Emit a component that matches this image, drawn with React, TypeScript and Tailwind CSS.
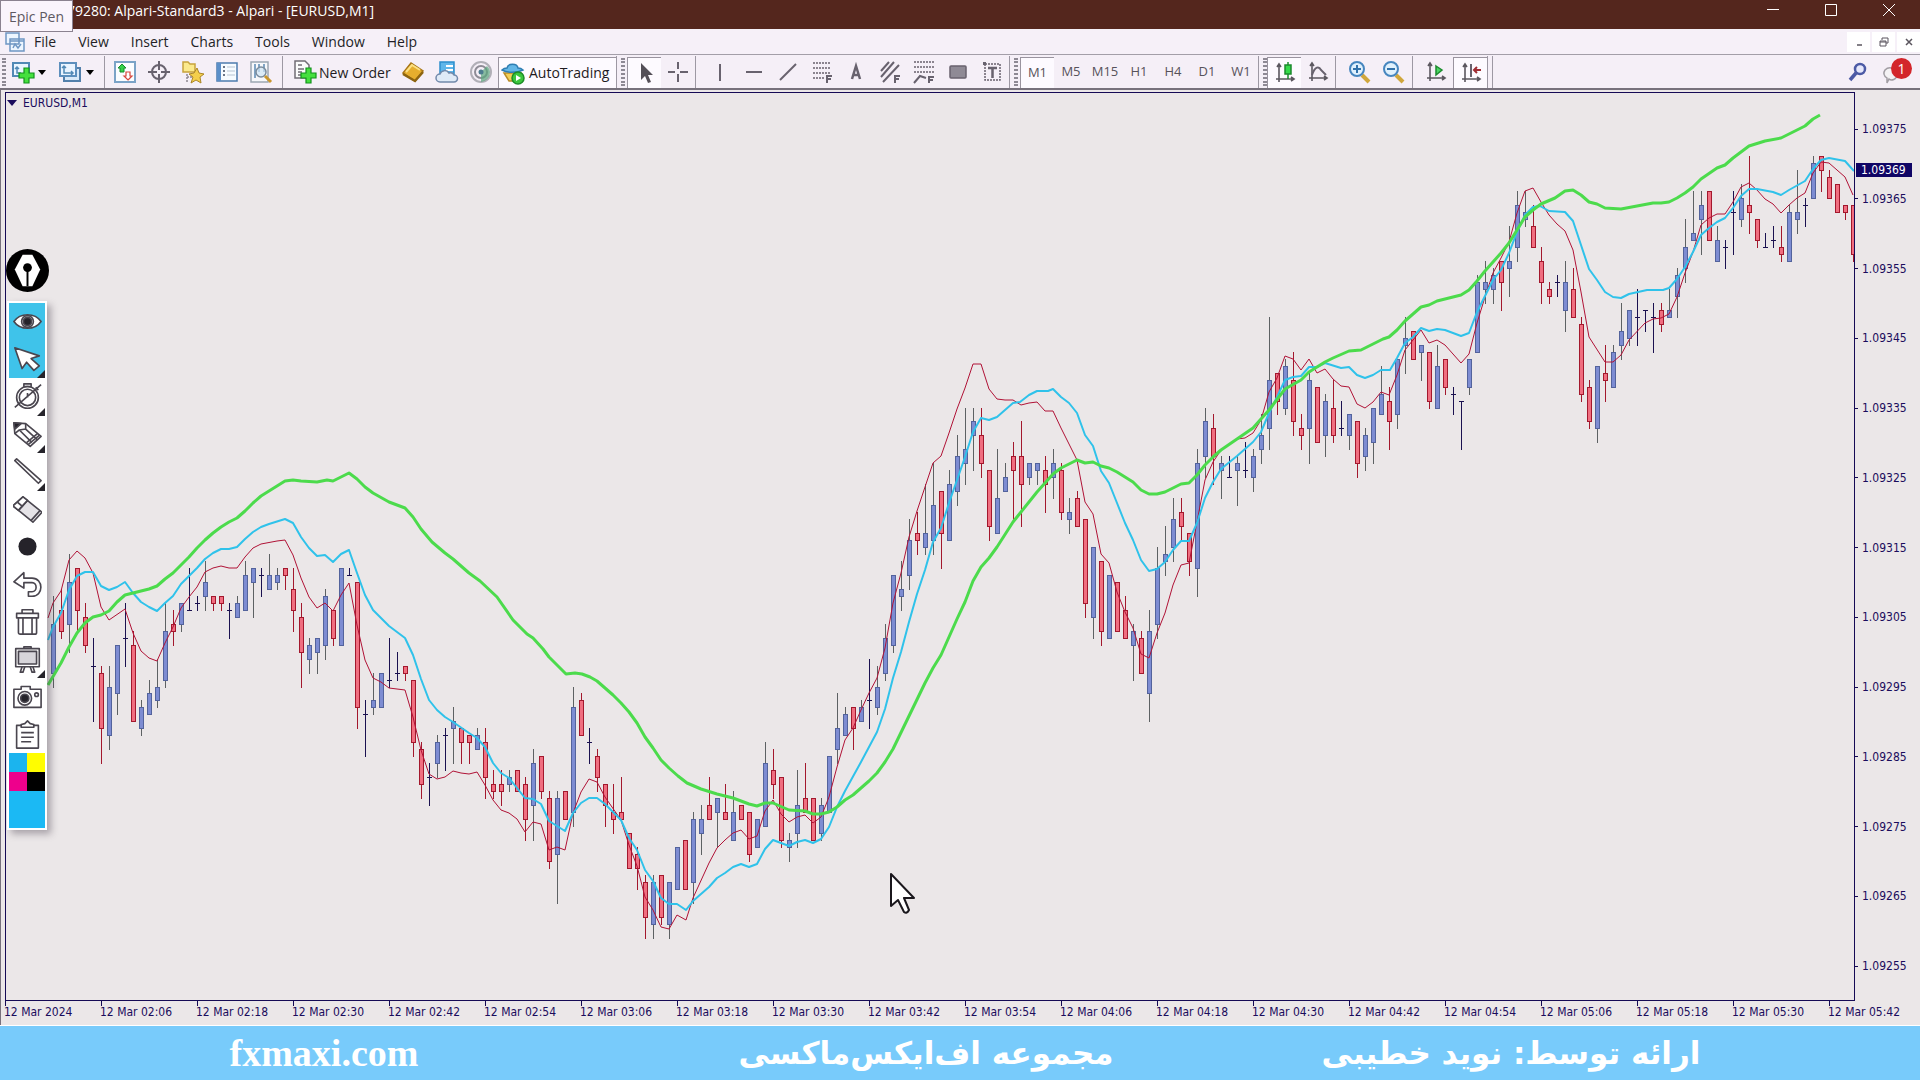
import type { ReactNode } from 'react';

type Candle = [open: number, high: number, low: number, close: number];

const BAR_WIDTH = 8;
const FIRST_BAR_X = 53;
const TOP_PRICE = 375;
const TOP_PRICE_Y = 128.5;
const POINT_HEIGHT = 6.975;

// Prices are points above 1.09000
const CANDLES: Candle[] = [
  [297, 308, 295, 304], [306, 309, 302, 303], [304, 314, 300, 310], [312, 312, 303, 306], [305, 307, 300, 301],
  [298, 302, 290, 298], [297, 298, 284, 289], [288, 298, 286, 295], [294, 301, 291, 301], [302, 307, 298, 302],
  [301, 303, 290, 290], [289, 293, 288, 292], [291, 296, 291, 294], [293, 299, 292, 295], [296, 307, 295, 303],
  [304, 306, 301, 303], [304, 307, 303, 307], [306, 312, 306, 306], [307, 308, 306, 307], [308, 313, 306, 310],
  [308, 308, 306, 307], [308, 308, 306, 307], [306, 307, 302, 306], [305, 308, 305, 307], [306, 313, 306, 311],
  [310, 312, 305, 312], [311, 312, 308, 311], [309, 314, 309, 311], [310, 312, 309, 311], [312, 312, 309, 311],
  [309, 312, 303, 306], [305, 307, 295, 300], [299, 302, 297, 301], [300, 302, 297, 302], [301, 309, 299, 308],
  [306, 306, 301, 302], [301, 312, 301, 312], [311, 312, 311, 311], [310, 310, 289, 292], [291, 293, 285, 291],
  [292, 297, 291, 293], [292, 297, 292, 297], [296, 302, 295, 296], [297, 300, 296, 297], [298, 298, 296, 297],
  [296, 296, 285, 287], [286, 287, 279, 281], [282, 284, 278, 282], [284, 288, 282, 287], [288, 289, 283, 288],
  [289, 292, 284, 290], [289, 289, 284, 287], [288, 288, 284, 287], [286, 289, 286, 288], [287, 289, 279, 282],
  [281, 283, 279, 280], [281, 283, 278, 280], [281, 283, 280, 282], [283, 283, 280, 280], [281, 282, 273, 276],
  [278, 286, 273, 284], [285, 285, 279, 280], [279, 280, 269, 270], [271, 280, 264, 279], [280, 280, 276, 276],
  [277, 295, 275, 292], [293, 294, 288, 288], [287, 289, 284, 287], [285, 286, 280, 282], [281, 281, 275, 278],
  [277, 281, 274, 276], [277, 282, 276, 276], [274, 274, 269, 269], [271, 272, 266, 269], [267, 268, 259, 262],
  [261, 268, 259, 267], [268, 268, 261, 262], [261, 267, 259, 267], [266, 272, 266, 272], [273, 273, 266, 266],
  [267, 277, 264, 276], [274, 278, 271, 276], [278, 282, 276, 276], [277, 279, 272, 279], [277, 281, 276, 276],
  [273, 280, 273, 277], [278, 278, 276, 276], [277, 277, 270, 271], [272, 276, 272, 276], [275, 287, 275, 284],
  [283, 286, 279, 281], [282, 282, 272, 273], [272, 274, 270, 273], [274, 283, 272, 278], [279, 284, 277, 277],
  [279, 279, 273, 273], [274, 279, 273, 278], [277, 285, 277, 285], [286, 294, 284, 289], [288, 292, 288, 291],
  [292, 292, 286, 289], [290, 293, 290, 292], [293, 299, 289, 293], [292, 298, 291, 295], [297, 304, 296, 302],
  [301, 311, 300, 311], [308, 313, 306, 309], [311, 319, 309, 316], [317, 320, 314, 316], [315, 324, 314, 317],
  [316, 327, 314, 321], [323, 323, 312, 317], [316, 326, 316, 324], [323, 331, 321, 328], [327, 335, 324, 329],
  [331, 335, 326, 333], [331, 335, 325, 327], [326, 326, 316, 318], [317, 329, 317, 322], [323, 327, 323, 325],
  [328, 330, 319, 326], [328, 333, 318, 324], [325, 327, 324, 327], [326, 327, 324, 327], [326, 328, 320, 324],
  [325, 329, 322, 327], [326, 327, 319, 320], [319, 322, 317, 320], [322, 323, 318, 318], [319, 319, 305, 307],
  [305, 315, 302, 315], [313, 313, 301, 303], [302, 311, 302, 311], [310, 310, 303, 303], [306, 308, 302, 302],
  [301, 304, 296, 303], [302, 303, 297, 297], [294, 306, 290, 303], [304, 315, 302, 312], [313, 318, 311, 314],
  [315, 322, 313, 319], [320, 322, 316, 318], [317, 317, 311, 313], [312, 329, 308, 327], [328, 335, 325, 333],
  [332, 334, 324, 328], [326, 328, 322, 327], [325, 328, 325, 325], [326, 328, 321, 327], [326, 330, 325, 326],
  [325, 329, 323, 328], [329, 334, 327, 331], [332, 348, 329, 339], [340, 340, 334, 336], [335, 342, 334, 341],
  [339, 343, 331, 333], [332, 334, 329, 331], [332, 340, 327, 339], [338, 338, 330, 330], [331, 337, 328, 336],
  [335, 339, 330, 331], [332, 336, 331, 332], [331, 334, 329, 334], [333, 333, 325, 327], [328, 332, 326, 331],
  [330, 335, 327, 335], [334, 341, 334, 337], [336, 338, 329, 333], [334, 342, 332, 342], [344, 348, 340, 345],
  [346, 346, 342, 342], [343, 344, 339, 344], [343, 343, 335, 336], [335, 344, 335, 341], [342, 342, 337, 338],
  [337, 338, 334, 337], [336, 336, 329, 336], [338, 342, 337, 342], [343, 354, 343, 353], [352, 356, 350, 353],
  [352, 355, 350, 354], [356, 356, 349, 353], [355, 361, 351, 356], [358, 366, 356, 364], [362, 366, 361, 363],
  [361, 364, 358, 358], [356, 358, 350, 353], [352, 353, 350, 351], [353, 354, 351, 353], [349, 356, 346, 353],
  [352, 355, 348, 348], [347, 348, 336, 337], [338, 339, 332, 333], [332, 341, 330, 341], [340, 344, 336, 339],
  [338, 344, 338, 343], [344, 350, 342, 346], [345, 349, 344, 349], [348, 352, 344, 348], [349, 349, 346, 349],
  [348, 350, 343, 348], [349, 350, 346, 347], [348, 352, 348, 349], [351, 355, 348, 354], [355, 362, 353, 358],
  [359, 366, 359, 360], [362, 366, 357, 364], [366, 366, 359, 359], [356, 361, 356, 359], [358, 359, 355, 358],
  [363, 366, 357, 363], [362, 367, 361, 365], [364, 371, 360, 363], [362, 362, 358, 359], [358, 360, 358, 358],
  [359, 361, 358, 359], [358, 361, 356, 357], [356, 364, 356, 363], [362, 369, 360, 363], [364, 365, 361, 364],
  [365, 371, 365, 370], [371, 371, 366, 369], [368, 369, 365, 365], [367, 367, 363, 363], [364, 364, 362, 363],
  [364, 364, 356, 357],
];

const SLOW_AVERAGE =
  '48,685 61,663 69,647 77,633 85,623 93,617 101,615 109,611 117,602 125,595 133,593 141,591 149,589 157,586 165,579 173,573 181,565 189,557 197,548 205,540 213,533 221,527 229,522 237,518 245,511 253,503 261,496 269,491 277,486 285,481 293,480 301,481 317,482 327,480 333,481 349,473 357,479 365,487 373,493 389,502 405,508 413,517 421,529 432,542 445,553 453,559 469,573 480,581 497,597 513,620 527,634 533,638 543,649 549,657 566,674 575,673 582,674 590,677 597,681 605,688 613,695 621,703 629,712 637,723 645,737 653,748 661,760 669,768 678,776 687,783 701,789 717,794 733,798 749,804 757,806 765,803 773,803 789,810 805,811 813,814 821,814 829,812 837,807 845,800 853,795 861,788 869,781 877,773 885,762 893,749 909,716 925,683 933,668 941,655 949,637 957,619 965,602 973,581 981,567 989,558 997,547 1013,522 1021,512 1029,502 1037,492 1045,483 1053,474 1061,468 1069,464 1077,460 1085,463 1093,462 1101,466 1109,468 1117,472 1133,482 1141,490 1149,494 1157,494 1165,492 1181,484 1189,483 1197,475 1205,465 1213,457 1221,450 1237,439 1253,428 1261,419 1269,410 1285,389 1301,380 1309,372 1317,367 1325,362 1333,358 1349,351 1361,350 1373,344 1383,339 1389,337 1397,330 1405,321 1413,314 1421,307 1429,305 1437,301 1453,297 1461,295 1469,290 1477,281 1485,271 1493,262 1501,253 1509,243 1517,230 1525,217 1533,210 1541,204 1555,198 1565,191 1573,190 1581,195 1589,202 1597,204 1605,208 1621,209 1637,206 1653,203 1661,203 1669,202 1677,198 1685,193 1693,187 1701,179 1717,168 1725,165 1733,158 1741,152 1749,146 1765,141 1781,138 1797,130 1805,126 1813,119 1820,115';

const MEDIUM_AVERAGE =
  '48,640 53,627 61,613 69,590 77,576 85,572 93,572 101,586 109,590 117,587 125,582 133,593 141,602 149,607 157,611 165,603 173,596 181,584 189,576 197,568 205,559 213,553 221,549 229,549 237,547 245,539 253,532 261,527 269,524 285,519 293,523 301,537 309,548 317,556 325,555 333,562 341,554 349,550 357,573 365,595 373,610 381,618 389,626 405,638 413,655 421,679 429,700 437,710 445,717 453,722 469,733 477,738 485,747 493,763 501,773 509,778 517,788 525,798 533,799 541,804 549,821 557,826 565,831 573,813 581,803 589,798 597,798 605,804 613,812 621,820 629,838 637,850 645,870 653,881 661,898 669,904 677,904 686,910 693,901 709,887 717,878 725,873 733,867 741,864 749,867 757,864 765,849 773,840 789,846 797,842 805,840 813,843 821,839 829,827 837,807 845,791 861,762 877,732 885,709 893,678 901,652 909,622 917,594 925,570 933,542 941,528 949,503 957,480 965,457 973,432 981,418 989,420 997,417 1013,403 1020,402 1029,395 1037,391 1048,391 1053,389 1061,397 1069,403 1077,413 1085,435 1093,446 1101,471 1109,483 1117,503 1125,523 1133,540 1141,560 1149,571 1157,569 1165,562 1173,550 1181,541 1189,541 1197,523 1205,498 1213,482 1221,469 1237,456 1253,442 1261,432 1269,413 1277,397 1285,380 1293,377 1301,376 1309,367 1317,367 1325,363 1341,368 1349,367 1357,375 1365,378 1373,375 1381,370 1390,370 1397,358 1405,343 1413,337 1421,328 1429,331 1437,329 1445,330 1461,336 1469,333 1477,312 1485,296 1493,280 1501,270 1509,253 1517,232 1525,215 1533,207 1540,206 1549,211 1565,212 1573,221 1581,245 1589,269 1597,280 1605,292 1613,297 1621,298 1629,294 1647,290 1663,290 1669,288 1677,279 1685,267 1693,252 1701,235 1709,228 1717,222 1725,218 1733,208 1741,196 1749,189 1757,189 1773,192 1781,195 1789,190 1805,181 1813,169 1821,160 1829,158 1845,161 1854,171';

const FAST_AVERAGE =
  '48,618 53,603 61,591 69,560 77,551 85,558 93,573 101,607 109,620 125,609 133,633 141,651 149,658 157,661 165,643 173,627 181,608 189,597 197,587 205,572 213,568 221,566 229,568 237,568 245,557 253,548 261,544 277,541 285,540 293,555 301,578 309,597 317,608 325,603 333,611 341,595 349,583 357,625 365,660 373,678 381,682 389,688 405,690 413,717 421,750 429,774 437,779 445,777 453,771 461,773 469,774 477,772 485,785 493,800 501,810 509,813 517,819 525,832 533,822 541,824 549,850 557,847 565,850 573,813 581,792 589,779 597,782 605,797 621,820 629,845 637,866 645,897 653,910 661,927 669,929 677,915 686,920 693,898 709,863 717,848 725,840 733,833 741,830 749,839 757,836 765,811 773,800 781,814 789,822 797,817 805,815 813,823 821,817 829,797 837,767 845,740 853,728 861,710 869,693 877,678 885,648 893,603 901,573 909,537 917,511 925,487 933,463 941,456 949,433 957,409 965,388 973,364 981,364 989,389 997,399 1005,400 1013,400 1021,405 1029,403 1037,402 1045,411 1053,411 1061,428 1077,460 1085,502 1093,514 1101,554 1109,563 1117,592 1125,612 1133,628 1141,654 1149,658 1157,633 1165,613 1173,585 1181,565 1189,563 1197,522 1205,480 1213,462 1221,450 1237,439 1245,438 1253,433 1261,420 1269,392 1277,378 1285,356 1293,359 1301,370 1309,359 1317,373 1325,369 1333,379 1341,386 1349,387 1357,404 1365,408 1373,402 1381,392 1389,395 1397,375 1405,350 1413,340 1421,330 1429,343 1437,340 1445,345 1453,354 1461,363 1469,354 1477,323 1485,297 1493,273 1501,258 1509,242 1517,213 1525,191 1533,188 1541,202 1549,215 1557,224 1565,231 1573,250 1581,292 1589,337 1605,362 1613,362 1621,355 1629,340 1645,323 1653,319 1661,318 1669,314 1677,297 1685,273 1693,252 1701,225 1709,218 1717,214 1725,214 1733,202 1741,187 1749,183 1757,190 1765,199 1773,204 1781,213 1789,205 1797,198 1805,193 1813,173 1821,162 1829,163 1837,170 1845,177 1853,195';

const PRICES = ['1.09375', '1.09365', '1.09355', '1.09345', '1.09335', '1.09325', '1.09315', '1.09305', '1.09295', '1.09285', '1.09275', '1.09265', '1.09255'];

const TIMES = [
  '2024', '02:06', '02:18', '02:30', '02:42', '02:54', '03:06', '03:18', '03:30', '03:42',
  '03:54', '04:06', '04:18', '04:30', '04:42', '04:54', '05:06', '05:18', '05:30', '05:42',
];

const MENUS = ['File', 'View', 'Insert', 'Charts', 'Tools', 'Window', 'Help'];
const TIMEFRAMES = ['M1', 'M5', 'M15', 'H1', 'H4', 'D1', 'W1'];

const priceToY = (price: number) => Math.round(TOP_PRICE_Y + (TOP_PRICE - price) * POINT_HEIGHT);

function CandleBar({ candle, index }: { candle: Candle; index: number }) {
  const [open, high, low, close] = candle;
  const x = FIRST_BAR_X + index * BAR_WIDTH;
  const top = priceToY(Math.max(open, close));
  const bottom = priceToY(Math.min(open, close));
  const doji = open === close;
  const up = close > open;
  const wick = doji ? '#1b1150' : up ? '#5d6163' : '#a3182d';

  return (
    <g>
      <path d={`M${x + 0.5} ${priceToY(high)}V${priceToY(low) + 1}`} stroke={wick} />
      {doji ? (
        <path d={`M${x - 2} ${top + 0.5}h5`} stroke={wick} />
      ) : (
        <rect
          x={x - 1.5}
          y={top + 0.5}
          width={4}
          height={bottom - top}
          fill={up ? '#7d8cd2' : '#f06e80'}
          stroke={up ? '#53639c' : '#a3182d'}
        />
      )}
    </g>
  );
}

function PriceChart() {
  return (
    <svg className="block h-full w-full" role="img" aria-label="EURUSD one minute chart">
      <g transform="translate(-6 -93)" fill="none">
        {CANDLES.map((candle, index) => (
          <CandleBar key={index} candle={candle} index={index} />
        ))}
        <polyline points={FAST_AVERAGE} stroke="#b01236" strokeWidth="1" />
        <polyline points={MEDIUM_AVERAGE} stroke="#2fc2ea" strokeWidth="2" strokeLinejoin="round" />
        <polyline points={SLOW_AVERAGE} stroke="#4cdb4c" strokeWidth="3" strokeLinejoin="round" />
      </g>
    </svg>
  );
}

function Icon({ children }: { children: ReactNode }) {
  return (
    <svg viewBox="0 0 24 24" className="h-6 w-6 shrink-0" fill="none" stroke="#68626e" strokeWidth="1.5">
      {children}
    </svg>
  );
}

function ToolButton({ label, active, children }: { label: string; active?: boolean; children: ReactNode }) {
  return (
    <button
      type="button"
      aria-label={label}
      className={
        active
          ? 'flex h-[31px] w-[34px] shrink-0 items-center justify-center border-t border-l border-[#9a949f] bg-[#fdfaff]'
          : 'flex h-[31px] w-[34px] shrink-0 items-center justify-center'
      }
    >
      {children}
    </button>
  );
}

function Separator() {
  return <div className="h-8 w-px shrink-0 bg-[#9d98a3]" />;
}

function Grip() {
  return <div className="h-7 w-1 shrink-0 border-x-2 border-dotted border-[#8e8994]" />;
}

function Axes() {
  return <path d="M6 3v18M3 18h18M4 6l2-3 2 3M18 16l3 2-3 2" stroke="#5b575f" strokeWidth="1.6" />;
}

function Plus() {
  return <path d="M13 8h5v5h5v5h-5v5h-5v-5H8v-5h5z" fill="#45e03e" stroke="#12921c" strokeWidth="1.2" />;
}

function Toolbar() {
  return (
    <div className="flex h-[33px] shrink-0 items-center overflow-hidden bg-[#f5eff7] pt-px text-[14px] text-[#1f1b22]">
      <div className="flex items-center pl-[2px]">
        <Grip />
        <button type="button" aria-label="New chart" className="flex w-[40px] items-center justify-between pl-[5px]">
          <Icon>
            <path d="M2 3h16v13H2z" fill="#eaf6ff" stroke="#5189b5" strokeWidth="2" />
            <path d="M6 7v6h4M4 9l2-2 2 2" stroke="#5189b5" />
            <Plus />
          </Icon>
          <svg viewBox="0 0 8 5" className="h-[5px] w-2"><path d="M0 0h8L4 5z" /></svg>
        </button>
        <button type="button" aria-label="Profiles" className="ml-3 flex w-[36px] items-center justify-between">
          <Icon>
            <path d="M6 8h16v13H6z" fill="#d9e9f8" stroke="#5380ab" strokeWidth="2" />
            <path d="M2 3h16v13H2z" fill="#eaf4ff" stroke="#5d8fbd" strokeWidth="2" />
            <path d="M6 6v7h9M4 8l2-2 2 2M13 11l2 2-2 2" stroke="#5189b5" />
          </Icon>
          <svg viewBox="0 0 8 5" className="h-[5px] w-2"><path d="M0 0h8L4 5z" /></svg>
        </button>
      </div>
      <div className="ml-[10px] flex items-center">
        <Separator />
        <div className="w-[3px]" />
        <ToolButton label="Market Watch">
          <Icon>
            <path d="M2 2h20v20H2z" fill="#fbfdff" stroke="#7ba3c7" strokeWidth="2" />
            <path d="M9 4l4 4-2 0v4H7V8H5z" fill="#35d14a" stroke="#168c2a" strokeWidth="1" />
            <path d="M15 20l4-4h-2v-4h-4v4h-2z" fill="#fff" stroke="#d8463c" strokeWidth="1.2" />
          </Icon>
        </ToolButton>
        <ToolButton label="Data Window">
          <Icon>
            <circle cx="12" cy="12" r="7" strokeWidth="2" />
            <path d="M12 1v9M12 14v9M1 12h9M14 12h9" strokeWidth="2" />
          </Icon>
        </ToolButton>
        <ToolButton label="Navigator">
          <Icon>
            <path d="M2 2h5l2 2h5v8H2z" fill="#fbe98c" stroke="#c7a33d" />
            <path d="M6 14v8M6 17h5" stroke="#8d8891" strokeDasharray="2 1" />
            <path d="M16 8l2 5 5 1-4 3 1 6-5-3-5 3 2-6-4-3 5-1z" fill="#f4cf4b" stroke="#ac8626" strokeWidth="1" />
          </Icon>
        </ToolButton>
        <ToolButton label="Terminal">
          <Icon>
            <path d="M2 3h20v18H2z" fill="#f6fbff" stroke="#4d7cae" strokeWidth="1.5" />
            <path d="M2 3h4v18H2z" fill="#5b8fc9" stroke="none" />
            <path d="M8 7h2M8 11h2M8 15h2" stroke="#3c4a60" />
            <path d="M12 7h8M12 11h8M12 15h8" stroke="#b7c4d2" strokeWidth="1" />
          </Icon>
        </ToolButton>
        <ToolButton label="Strategy Tester">
          <Icon>
            <path d="M2 2h17v20H2z" fill="#f7f8fb" stroke="#9ca6b3" />
            <path d="M6 4v14M10 4v8M15 4v8" stroke="#5c89b4" />
            <circle cx="12" cy="12" r="5" fill="#cfe5f5" fillOpacity=".7" stroke="#7a8b9c" />
            <path d="M16 16l6 6" stroke="#c9962d" strokeWidth="3" />
          </Icon>
        </ToolButton>
        <div className="ml-1"><Separator /></div>
      </div>
      <button type="button" className="flex w-[109px] shrink-0 items-center gap-[2px] pl-[10px] whitespace-nowrap">
        <Icon>
          <path d="M2 1h10l4 4v13H2z" fill="#fbfbfb" stroke="#716d75" />
          <path d="M5 5h4M5 9h6M5 12h4M5 15h3" stroke="#716d75" />
          <Plus />
        </Icon>
        New Order
      </button>
      <div className="ml-1 flex items-center">
        <ToolButton label="MetaEditor">
          <Icon>
            <path d="M2 13L10 3l12 8-8 10z" fill="#e6ae2e" stroke="#a97617" />
            <path d="M2 14l12 7 8-9" stroke="#8d6410" strokeWidth="2.5" />
            <path d="M5 12l6-7 8 5" stroke="#fbe083" strokeWidth="2" />
          </Icon>
        </ToolButton>
        <ToolButton label="Virtual hosting">
          <Icon>
            <path d="M5 2h14v13H5z" fill="#5fb6ea" stroke="#2d8fcd" />
            <path d="M11 6h7M11 10h7" stroke="#fff" strokeWidth="2" />
            <path d="M5 22a4 4 0 0 1 0-8 5 5 0 0 1 9-1 4 4 0 0 1 5 2 3.500 3.500 0 0 1 0 7z" fill="#dfeaf7" stroke="#7289ab" />
          </Icon>
        </ToolButton>
        <ToolButton label="Signals">
          <Icon>
            <circle cx="12" cy="12" r="10" stroke="#b1afb7" strokeWidth="2" />
            <circle cx="12" cy="12" r="6" stroke="#8f8c96" strokeWidth="2" />
            <path d="M12 12v10a10 10 0 0 0 9-10 9 9 0 0 0-3-6z" fill="#5aa57c" fillOpacity=".7" stroke="none" />
            <circle cx="12" cy="12" r="2.500" fill="#4d7c8f" stroke="none" />
          </Icon>
        </ToolButton>
      </div>
      <button
        type="button"
        className="flex h-[31px] w-[118px] shrink-0 items-center gap-1 border-t border-l border-[#9a949f] bg-[#fdfaff] pl-[2px] whitespace-nowrap"
      >
        <Icon>
          <path d="M3 12h17l-3 8H8z" fill="#f3cf58" stroke="#b98c27" />
          <path d="M1 9c5 3 15 3 21 0-2-2-5-2-5-2-1-5-10-5-11 0 0 0-3 0-5 2z" fill="#63b6e6" stroke="#2f7eb3" />
          <circle cx="17" cy="17" r="6" fill="#3bc63d" stroke="#1c8d27" />
          <path d="M15 14l5 3-5 3z" fill="#fff" stroke="none" />
        </Icon>
        AutoTrading
      </button>
      <div className="flex items-center gap-1">
        <Separator />
        <Grip />
      </div>
      <div className="ml-[2px] flex items-center">
        <ToolButton label="Cursor" active>
          <Icon><path d="M8 2v17l4-4 3 7 3-1-3-7h5z" fill="#544f58" stroke="none" /></Icon>
        </ToolButton>
        <ToolButton label="Crosshair">
          <Icon><path d="M12 2v7M12 14v8M2 12h7M14 12h8" strokeWidth="2" /></Icon>
        </ToolButton>
        <div className="mr-[7px]"><Separator /></div>
        <ToolButton label="Vertical line">
          <Icon><path d="M12 4v17" strokeWidth="2" /></Icon>
        </ToolButton>
        <ToolButton label="Horizontal line">
          <Icon><path d="M4 12h16" strokeWidth="2" /></Icon>
        </ToolButton>
        <ToolButton label="Trendline">
          <Icon><path d="M4 20L20 4" strokeWidth="2" /></Icon>
        </ToolButton>
        <ToolButton label="Fibonacci retracement">
          <Icon>
            <path d="M3 3h18M3 8h18M3 13h18M3 18h11" strokeDasharray="2 1" />
            <path d="M17 23v-7h5M17 19h4" strokeWidth="2" />
          </Icon>
        </ToolButton>
        <ToolButton label="Text">
          <Icon><path d="M8 19l4-13 4 13M9 15h6" strokeWidth="2.500" /></Icon>
        </ToolButton>
        <ToolButton label="Channel">
          <Icon>
            <path d="M3 11l8-9M3 17L16 2M5 22L21 5" strokeWidth="2" />
            <path d="M17 23v-7h5M17 19h4" strokeWidth="2" />
          </Icon>
        </ToolButton>
        <ToolButton label="Fibonacci fan">
          <Icon>
            <path d="M2 2h20M2 7h20M2 12h20" strokeDasharray="2 1" />
            <path d="M2 23l6-7 6 2M17 23v-6h5M17 20h4" strokeWidth="2" />
          </Icon>
        </ToolButton>
        <ToolButton label="Rectangle">
          <Icon><rect x="4" y="6" width="16" height="12" rx="1" fill="#8f8a95" /></Icon>
        </ToolButton>
        <ToolButton label="Text label">
          <Icon>
            <path d="M5 4h15v16H5z" strokeDasharray="2 1" />
            <path d="M8 8h9M12.500 8v10" strokeWidth="2.500" />
            <path d="M3 2h3v3H3z" fill="#68626e" stroke="none" />
          </Icon>
        </ToolButton>
        <Separator />
      </div>
      <div className="ml-1 flex items-center">
        <Grip />
        <div className="ml-[2px] flex items-center text-[13px] text-[#57525b]">
          {TIMEFRAMES.map((frame) => (
            <ToolButton key={frame} label={frame} active={frame === 'M1'}>{frame}</ToolButton>
          ))}
        </div>
        <Separator />
      </div>
      <div className="ml-1 flex items-center">
        <Grip />
        <ToolButton label="Candlesticks" active>
          <Icon>
            <Axes />
            <path d="M15 1v17" stroke="#1b8b2e" />
            <path d="M12 4h6v9h-6z" fill="#35da4a" stroke="#1b8b2e" />
          </Icon>
        </ToolButton>
        <ToolButton label="Line chart">
          <Icon>
            <Axes />
            <path d="M6 15c3-9 7-9 9-5l5 5" strokeWidth="2" />
          </Icon>
        </ToolButton>
        <Separator />
        <div className="w-[6px]" />
        <ToolButton label="Zoom in">
          <Icon>
            <path d="M15 15l7 7" stroke="#d0a73c" strokeWidth="4" />
            <circle cx="10" cy="9" r="7" fill="#e0f1fd" stroke="#4686bf" strokeWidth="2" />
            <path d="M10 5v8M6 9h8" stroke="#3272ab" strokeWidth="2" />
          </Icon>
        </ToolButton>
        <ToolButton label="Zoom out">
          <Icon>
            <path d="M15 15l7 7" stroke="#d0a73c" strokeWidth="4" />
            <circle cx="10" cy="9" r="7" fill="#e0f1fd" stroke="#4686bf" strokeWidth="2" />
            <path d="M6 9h8" stroke="#3272ab" strokeWidth="2" />
          </Icon>
        </ToolButton>
        <div className="mr-[6px] ml-[2px]"><Separator /></div>
        <ToolButton label="Auto scroll">
          <Icon>
            <Axes />
            <path d="M12 6l6 4-6 5z" fill="#4bd763" stroke="#1b8b2e" />
          </Icon>
        </ToolButton>
        <ToolButton label="Chart shift" active>
          <Icon>
            <Axes />
            <path d="M12 3v13" strokeWidth="2" />
            <path d="M22 9h-7M18 6l-3 3 3 3" stroke="#a02c33" strokeWidth="2" />
          </Icon>
        </ToolButton>
        <div className="flex gap-1"><Separator /><Separator /></div>
      </div>
      <div className="ml-auto flex items-center gap-1 pr-[8px]">
        <button type="button" aria-label="Search" className="flex w-9 justify-center">
          <Icon>
            <circle cx="14" cy="9" r="5" fill="#e6e8fb" stroke="#4c5aa5" strokeWidth="2.500" />
            <path d="M10 13l-6 7" stroke="#4c5aa5" strokeWidth="3.500" />
          </Icon>
        </button>
        <button type="button" aria-label="1 notification" className="relative flex h-8 w-8 items-center">
          <Icon>
            <path d="M5 10c4-4 12-2 12 4s-6 7-8 5l-2 4v-5c-3-2-4-5-2-8z" fill="#f4f2f4" stroke="#a19da3" />
          </Icon>
          <span className="absolute top-[2px] right-0 flex h-[21px] w-[21px] items-center justify-center rounded-full bg-[#d3262b] text-[14px] text-white">
            1
          </span>
        </button>
      </div>
    </div>
  );
}

const PEN_TOOLS: { label: string; active?: boolean; more?: boolean; art: ReactNode }[] = [
  {
    label: 'Show drawings',
    active: true,
    art: (
      <>
        <path d="M1 16C8 6 24 6 31 16c-7 10-23 10-30 0z" fill="#fff" />
        <circle cx="16" cy="16" r="6.500" fill="#fff" />
        <circle cx="16" cy="16" r="4.500" fill="#25232a" />
      </>
    ),
  },
  { label: 'Pointer', active: true, more: true, art: <path d="M2 3l8 23 5-7 8 9 6-5-9-8 9-3z" fill="#fff" /> },
  {
    label: 'Fading ink',
    more: true,
    art: (
      <>
        <circle cx="16" cy="17" r="12" />
        <circle cx="16" cy="17" r="9" />
        <path d="M12 2h8v3h-8zM25 6l3 3M16 17v-5M2 28L31 3" />
      </>
    ),
  },
  {
    label: 'Pencil',
    more: true,
    art: (
      <>
        <path d="M1 3l13 1 17 14-12 11L2 15z" fill="#fff" />
        <path d="M1 3l8 1-7 6z" fill="#25232a" />
        <path d="M14 4v6l-7 1-5 4M14 10l13 12M7 11l14 14M27 15l-12 10M29 17L17 27" />
      </>
    ),
  },
  { label: 'Line', more: true, art: <path d="M2 4l2-2 27 24-3 3z" fill="#fff" /> },
  {
    label: 'Eraser',
    art: (
      <>
        <path d="M0 12L11 2l21 17-10 11z" fill="#e5e3e7" />
        <path d="M0 12L11 2l5 4L6 17z" fill="#fff" />
        <path d="M6 17L16 6M20 28l10-11M5 8l6 5" />
      </>
    ),
  },
  { label: 'Brush size', art: <circle cx="16" cy="16" r="10" fill="#25232a" stroke="none" /> },
  { label: 'Undo', art: <path d="M1 13L12 3v6h9c13 0 13 20 0 20h-4v-5h4c6 0 6-10 0-10h-9v6z" fill="#fff" /> },
  {
    label: 'Clear',
    art: <path d="M4 7h24v5H4zM6 12h20v16q0 2-2 2H8q-2 0-2-2zM10 7V3h12v4M11 13v16M21 13v16" />,
  },
  {
    label: 'Whiteboard',
    more: true,
    art: (
      <>
        <path d="M3 4h26v20H3z" fill="#fff" />
        <path d="M6 7h20v14H6z" fill="#d7d5da" />
        <path d="M12 4V2h8v2M10 24l-2 6h3l2-6M19 24l2 6h3l-2-6" />
      </>
    ),
  },
  {
    label: 'Screenshot',
    art: (
      <>
        <path d="M1 8h8V5h10v3h12v20H1z" fill="#fff" />
        <circle cx="13" cy="18" r="7.500" />
        <circle cx="13" cy="18" r="4.500" fill="#25232a" />
        <circle cx="26" cy="14" r="2" />
      </>
    ),
  },
  {
    label: 'Menu',
    art: (
      <>
        <path d="M10 6H4v25h24V6h-6" />
        <path d="M9 8V5l4-1 3-3 3 3 4 1v3zM9 14h14M9 19h14M9 24h11" />
      </>
    ),
  },
];

function PenPalette() {
  return (
    <aside className="absolute top-[249px] left-[6px] w-[43px]" aria-label="Epic Pen tools">
      <svg viewBox="0 0 44 44" className="h-[43px] w-[43px]">
        <circle cx="22" cy="22" r="22" fill="#000" />
        <path d="M17 6h10l8 15-8 17H17L9 21z" fill="#fff" />
        <circle cx="22" cy="19" r="4.500" />
        <path d="M22 20v18" stroke="#000" strokeWidth="2" />
      </svg>
      <div className="mt-[9px] ml-px w-10 bg-white p-[2px] shadow-[4px_4px_7px_rgba(70,60,75,0.4)]">
        <div className="grid h-[450px] grid-rows-12">
          {PEN_TOOLS.map((tool) => (
            <button
              key={tool.label}
              type="button"
              aria-label={tool.label}
              className={tool.active ? 'relative flex items-center justify-center bg-[#3fc3ea]' : 'relative flex items-center justify-center'}
            >
              <svg viewBox="0 0 32 32" className="h-[29px] w-[29px]" fill="none" stroke="#4a464f" strokeWidth="1.800" strokeLinejoin="round">
                {tool.art}
              </svg>
              {tool.more && (
                <svg viewBox="0 0 8 8" className="absolute right-0 bottom-0 h-2 w-2">
                  <path d="M8 0v8H0z" fill="#25232a" />
                </svg>
              )}
            </button>
          ))}
        </div>
        <div className="grid grid-cols-2">
          <button type="button" aria-label="Blue" className="h-[19px] bg-[#1bb4ee]" />
          <button type="button" aria-label="Yellow" className="h-[19px] bg-[#fffd00]" />
          <button type="button" aria-label="Magenta" className="h-[19px] bg-[#ee008c]" />
          <button type="button" aria-label="Black" className="h-[19px] bg-black" />
        </div>
        <button type="button" aria-label="Current colour" className="block h-[37px] w-full bg-[#1bb9f4]" />
      </div>
    </aside>
  );
}

function TitleBar() {
  return (
    <header className="flex h-[29px] shrink-0 items-start bg-[#54261d] text-[14px] text-white">
      <h1 className="pl-[67px] leading-[22px] whitespace-nowrap">79280: Alpari-Standard3 - Alpari - [EURUSD,M1]</h1>
      <div className="ml-auto flex pr-[2px]">
        <button type="button" aria-label="Minimize" className="flex h-5 w-[58px] items-center justify-center">
          <svg viewBox="0 0 12 12" className="h-3 w-3" stroke="#fff"><path d="M0 5.500h12" /></svg>
        </button>
        <button type="button" aria-label="Maximize" className="flex h-5 w-[58px] items-center justify-center">
          <svg viewBox="0 0 12 12" className="h-3 w-3" stroke="#fff" fill="none"><path d="M.5.5h11v11H.5z" /></svg>
        </button>
        <button type="button" aria-label="Close" className="flex h-5 w-[58px] items-center justify-center">
          <svg viewBox="0 0 12 12" className="h-3 w-3" stroke="#fff"><path d="M0 0l12 12M12 0L0 12" /></svg>
        </button>
      </div>
    </header>
  );
}

function MenuBar() {
  return (
    <nav className="flex h-[26px] shrink-0 items-center border-b border-[#a39ea8] bg-[#f6f0f8] text-[14px] text-[#231f26]">
      <svg viewBox="0 0 20 20" className="ml-[5px] h-5 w-5" fill="#edf6ff" stroke="#6f97c4" strokeWidth="1.500">
        <path d="M1 1h13v11H1zM5 7h14v12H5z" />
        <path d="M5 9h14M8 16l2-4 3 4 3-4" />
      </svg>
      <div className="ml-[9px] flex gap-[22px]">
        {MENUS.map((menu) => (
          <button key={menu} type="button">{menu}</button>
        ))}
      </div>
      <div className="ml-auto flex gap-[2px] text-[#5a555e]">
        <button type="button" aria-label="Minimize chart" className="flex h-5 w-[23px] items-center justify-center bg-white">
          <svg viewBox="0 0 10 10" className="h-[10px] w-[10px]" stroke="currentColor" strokeWidth="1.5"><path d="M3 8h5" /></svg>
        </button>
        <button type="button" aria-label="Restore chart" className="flex h-5 w-[23px] items-center justify-center bg-white">
          <svg viewBox="0 0 10 10" className="h-[10px] w-[10px]" stroke="currentColor" fill="none"><path d="M3 3V1h6v5H7M1 4h6v5H1zM1 5h6" /></svg>
        </button>
        <button type="button" aria-label="Close chart" className="flex h-5 w-[23px] items-center justify-center bg-white">
          <svg viewBox="0 0 10 10" className="h-[10px] w-[10px]" stroke="currentColor" strokeWidth="1.5"><path d="M2 2l6 6M8 2L2 8" /></svg>
        </button>
      </div>
    </nav>
  );
}

export default function App() {
  return (
    <div className="relative flex h-screen flex-col overflow-hidden bg-[#ebe7e8] font-['Open_Sans',sans-serif]">
      <TitleBar />
      <MenuBar />
      <Toolbar />

      <main className="flex min-h-0 flex-1 flex-col border-t-2 border-l border-[#77717c] font-['DejaVu_Sans_Condensed','DejaVu_Sans',sans-serif] text-[12px] text-[#1a0c5c]">
        <div className="flex min-h-0 flex-1 pt-[2px] pl-1">
          <section className="relative min-w-0 flex-1 border border-[#150a55]">
            <PriceChart />
            <h2 className="absolute top-[2px] left-px flex items-center gap-[6px] leading-4">
              <svg viewBox="0 0 10 6" className="h-[6px] w-[10px]" fill="currentColor"><path d="M0 0h10L5 6z" /></svg>
              EURUSD,M1
            </h2>
          </section>
          <div className="relative flex w-[65px] shrink-0 flex-col justify-between pt-[29px] pb-[27px]">
            {PRICES.map((price) => (
              <div key={price} className="flex h-4 items-center gap-1">
                <span className="h-px w-[3px] bg-[#150a55]" />
                {price}
              </div>
            ))}
            <span className="absolute top-[71px] left-[1px] flex h-[14px] w-14 items-center bg-[#100565] pl-[5px] text-white">
              1.09369
            </span>
          </div>
        </div>
        <div className="flex h-6 shrink-0 overflow-hidden pl-[3px]">
          {TIMES.map((time) => (
            <div key={time} className="w-24 shrink-0 whitespace-nowrap">
              <div className="ml-[1px] h-[5px] w-px bg-[#150a55]" />
              <div className="leading-[12px]">12 Mar {time}</div>
            </div>
          ))}
        </div>
      </main>

      <footer className="grid h-[55px] shrink-0 grid-cols-[648fr_556fr_614fr] items-center border-t border-white bg-[#78cbfb] pr-[102px] text-[31px] font-bold text-white">
        <a href="#fxmaxi" className="text-center font-['Liberation_Serif',serif] text-[38px] leading-[50px]">fxmaxi.com</a>
        <span dir="rtl" lang="fa" className="text-center font-['DejaVu_Sans',sans-serif] leading-[50px] whitespace-nowrap">مجموعه اف‌ایکس‌ماکسی</span>
        <span dir="rtl" lang="fa" className="text-center font-['DejaVu_Sans',sans-serif] leading-[50px] whitespace-nowrap">ارائه توسط: نوید خطیبی</span>
      </footer>

      <PenPalette />
      <div role="tooltip" className="absolute top-0 left-0 flex h-8 w-[73px] items-center justify-center border border-[#8b8290] bg-[#faf4fc] text-[14px] whitespace-nowrap text-[#5e5962]">
        Epic Pen
      </div>
      <svg viewBox="0 0 26 42" className="absolute top-[872px] left-[889px] h-[42px] w-[26px]" fill="#fff" stroke="#1a171c" strokeWidth="2" strokeLinejoin="round">
        <path d="M2 2v32l7-6 6 12q3 2 5-2l-5-12h10z" />
      </svg>
    </div>
  );
}
